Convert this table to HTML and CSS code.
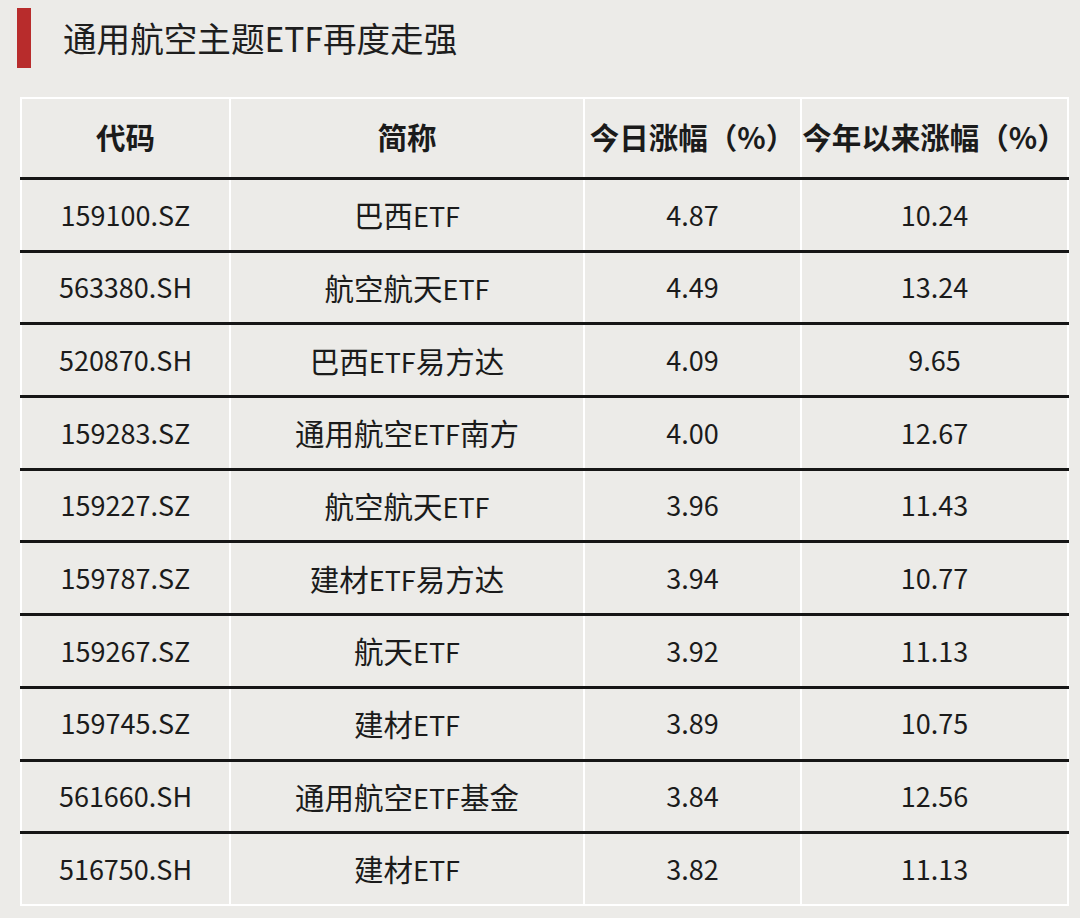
FILE: index.html
```html
<!DOCTYPE html>
<html lang="zh">
<head>
<meta charset="utf-8">
<link rel="stylesheet" href="styles.css">
</head>
<body>
<div class="page">
  <div class="title-row">
    <div class="bar"></div>
    <h1 class="title">通用航空主题ETF再度走强</h1>
  </div>
  <table class="etf">
    <colgroup>
      <col class="c1"><col class="c2"><col class="c3"><col class="c4">
    </colgroup>
    <thead>
      <tr><th>代码</th><th>简称</th><th>今日涨幅（%）</th><th>今年以来涨幅（%）</th></tr>
    </thead>
    <tbody>
      <tr><td>159100.SZ</td><td><span class="zh">巴西</span>ETF</td><td>4.87</td><td>10.24</td></tr>
      <tr><td>563380.SH</td><td><span class="zh">航空航天</span>ETF</td><td>4.49</td><td>13.24</td></tr>
      <tr><td>520870.SH</td><td><span class="zh">巴西</span>ETF<span class="zh">易方达</span></td><td>4.09</td><td>9.65</td></tr>
      <tr><td>159283.SZ</td><td><span class="zh">通用航空</span>ETF<span class="zh">南方</span></td><td>4.00</td><td>12.67</td></tr>
      <tr><td>159227.SZ</td><td><span class="zh">航空航天</span>ETF</td><td>3.96</td><td>11.43</td></tr>
      <tr><td>159787.SZ</td><td><span class="zh">建材</span>ETF<span class="zh">易方达</span></td><td>3.94</td><td>10.77</td></tr>
      <tr><td>159267.SZ</td><td><span class="zh">航天</span>ETF</td><td>3.92</td><td>11.13</td></tr>
      <tr><td>159745.SZ</td><td><span class="zh">建材</span>ETF</td><td>3.89</td><td>10.75</td></tr>
      <tr><td>561660.SH</td><td><span class="zh">通用航空</span>ETF<span class="zh">基金</span></td><td>3.84</td><td>12.56</td></tr>
      <tr><td>516750.SH</td><td><span class="zh">建材</span>ETF</td><td>3.82</td><td>11.13</td></tr>
    </tbody>
  </table>
</div>
</body>
</html>
```

FILE: styles.css
```css
html, body {
  margin: 0;
  padding: 0;
  background: #ecebe8;
}
body {
  font-family: "Noto Sans CJK SC", "Noto Sans", sans-serif;
  color: #1b1b1b;
  width: 1080px;
  height: 918px;
  overflow: hidden;
}
.page {
  padding-top: 8px;
}
.title-row {
  display: flex;
  align-items: center;
  gap: 32px;
  padding-left: 17px;
  height: 60px;
}
.bar {
  width: 14px;
  height: 60px;
  background: #b82c2c;
}
.title {
  margin: 0;
  font-size: 33.6px;
  font-weight: 400;
  color: #1e1e1e;
  line-height: 1;
  letter-spacing: 0;
}
.etf {
  margin: 29px 0 0 20px;
  width: 1047px;
  border-collapse: collapse;
  table-layout: fixed;
  border: 2px solid #ffffff;
}
.c1 { width: 209px; }
.c2 { width: 354px; }
.c3 { width: 217px; }
.c4 { width: 267px; }
.etf th, .etf td {
  text-align: center;
  vertical-align: middle;
  padding: 0;
  border-left: 2px solid #ffffff;
  border-right: 2px solid #ffffff;
  font-size: 27px;
  line-height: 1.2;
  white-space: nowrap;
}
.etf th {
  height: 75px;
  padding-bottom: 3px;
  font-size: 29.5px;
  font-weight: 700;
  border-bottom: 3px solid #161616;
}
.etf td {
  height: 69.7px;
  font-weight: 400;
  border-bottom: 3px solid #161616;
}
.etf .zh {
  font-size: 29.5px;
}
.etf tbody tr:last-child td {
  border-bottom: 2px solid #ffffff;
}
```
